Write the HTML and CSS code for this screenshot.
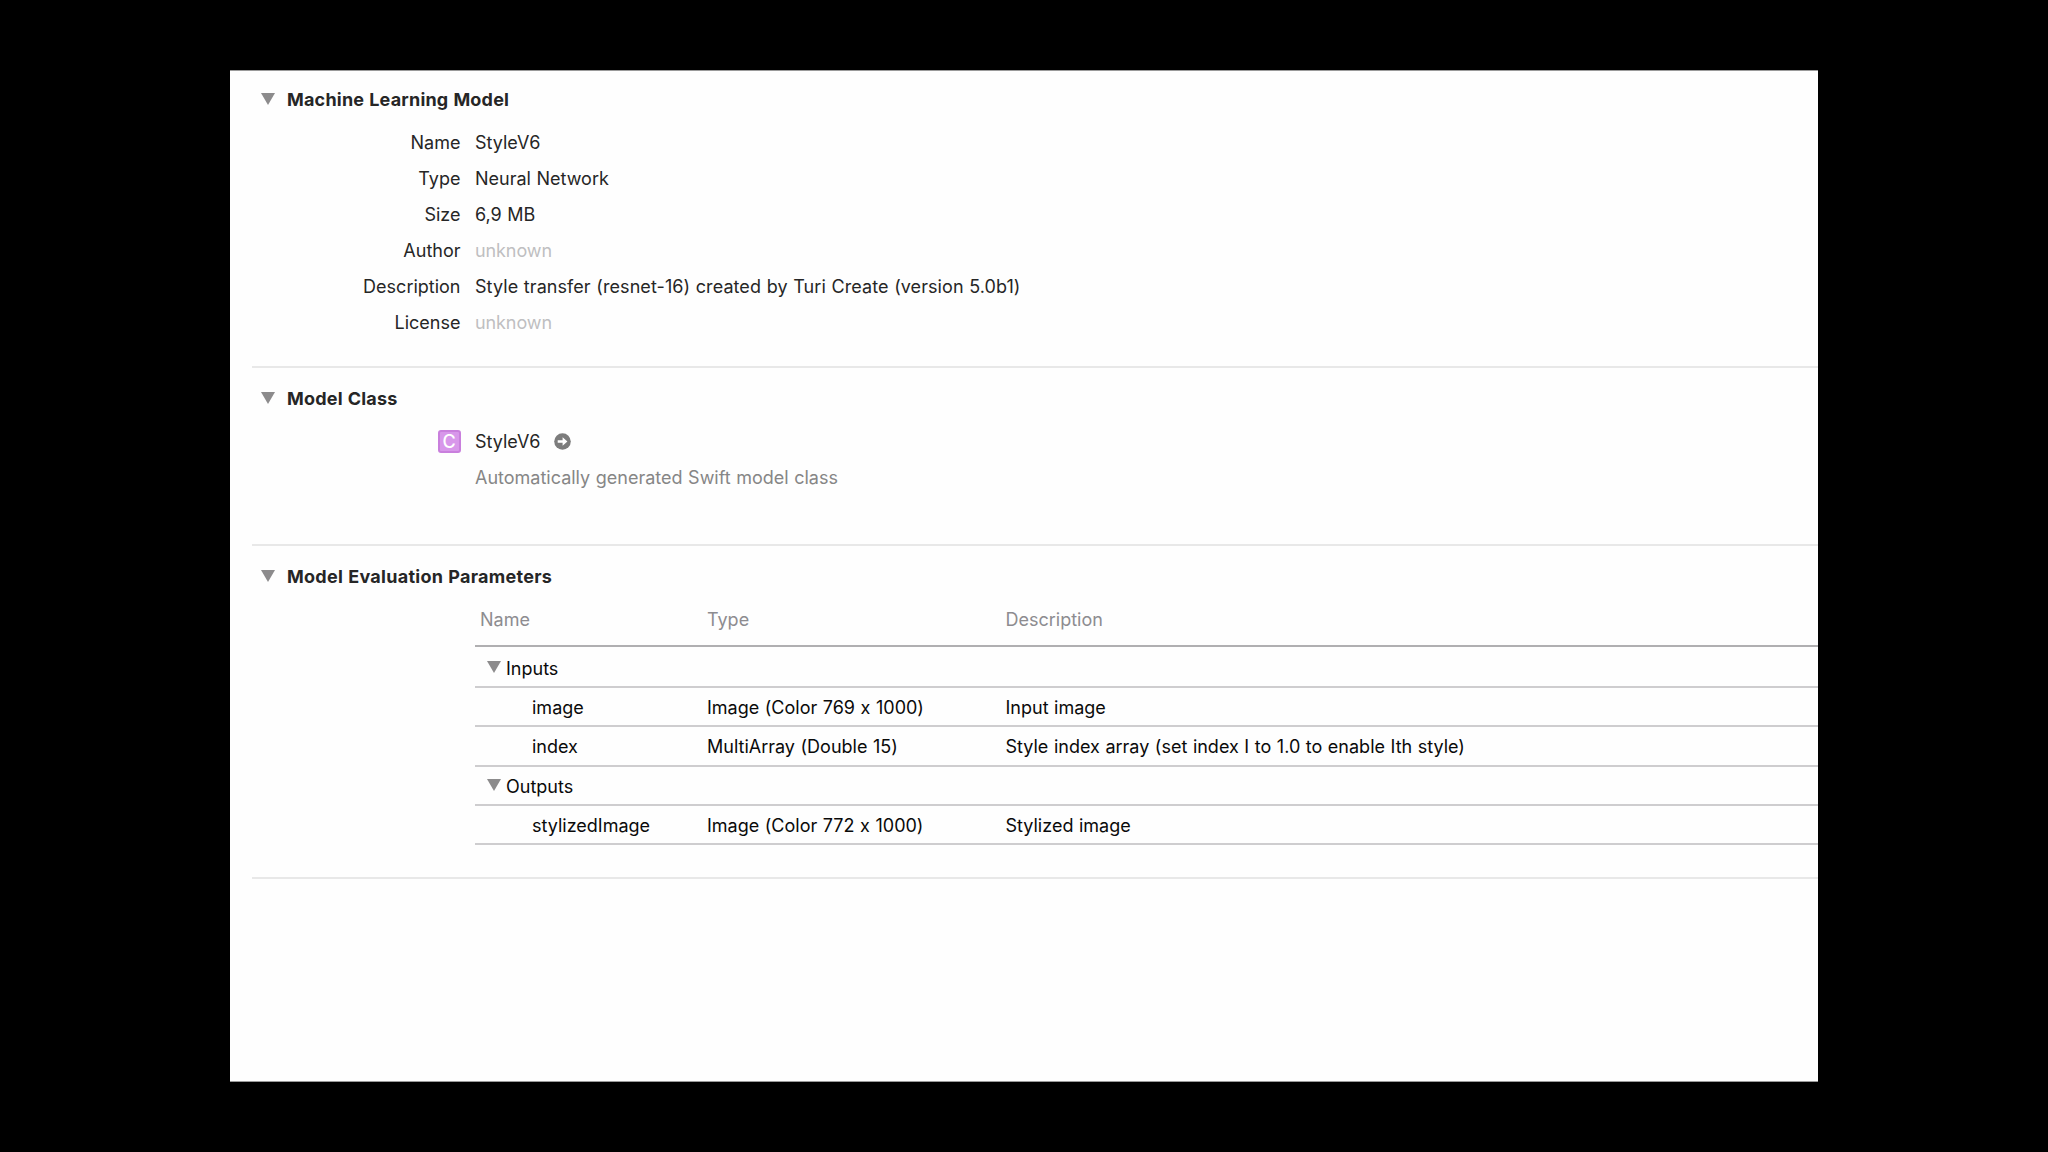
FILE: index.html
```html
<!DOCTYPE html>
<html lang="en">
<head>
  <meta charset="UTF-8">
  <title>StyleV6.mlmodel</title>
  <link rel="stylesheet" href="styles.css">
</head>
<body>
  <div class="panel">
    <section class="section model">
      <h2><svg class="triangle" viewBox="0 0 14 12"><path d="M0 0H14L7 12Z"/></svg>Machine Learning Model</h2>
      <dl class="info">
        <dt>Name</dt><dd>StyleV6</dd>
        <dt>Type</dt><dd>Neural Network</dd>
        <dt>Size</dt><dd>6,9 MB</dd>
        <dt>Author</dt><dd class="unknown">unknown</dd>
        <dt>Description</dt><dd class="summary">Style transfer (resnet-16) created by Turi Create (version 5.0b1)</dd>
        <dt>License</dt><dd class="unknown">unknown</dd>
      </dl>
    </section>

    <section class="section class">
      <h2><svg class="triangle" viewBox="0 0 14 12"><path d="M0 0H14L7 12Z"/></svg>Model Class</h2>
      <div class="info">
        <span class="badge">C</span>
        <div class="class-name">
          <span>StyleV6</span>
          <svg class="arrow" viewBox="0 0 17 17">
            <circle cx="8.5" cy="8.5" r="8.3" fill="#7c7c7c"/>
            <path d="M3.7 7.3H8.6V4.2L13.4 8.5L8.6 12.8V9.7H3.7Z" fill="#fff"/>
          </svg>
        </div>
        <p class="note">Automatically generated Swift model class</p>
      </div>
    </section>

    <section class="section params">
      <h2><svg class="triangle" viewBox="0 0 14 12"><path d="M0 0H14L7 12Z"/></svg>Model Evaluation Parameters</h2>
      <div class="table">
        <div class="row head"><span>Name</span><span>Type</span><span>Description</span></div>
        <div class="row group"><span><svg class="triangle" viewBox="0 0 14 12"><path d="M0 0H14L7 12Z"/></svg>Inputs</span></div>
        <div class="row item"><span>image</span><span>Image (Color 769 x 1000)</span><span>Input image</span></div>
        <div class="row item"><span>index</span><span>MultiArray (Double 15)</span><span>Style index array (set index I to 1.0 to enable Ith style)</span></div>
        <div class="row group"><span><svg class="triangle" viewBox="0 0 14 12"><path d="M0 0H14L7 12Z"/></svg>Outputs</span></div>
        <div class="row item"><span>stylizedImage</span><span>Image (Color 772 x 1000)</span><span>Stylized image</span></div>
      </div>
    </section>
  </div>
</body>
</html>
```

FILE: styles.css
```css
* {
  box-sizing: border-box;
}

body {
  margin: 0;
  height: 1152px;
  padding: 70px 230px 0;
  background-color: #000;
  font-family: Inter, "Liberation Sans", sans-serif;
  font-size: 18px;
  font-feature-settings: "calt" 0;
  word-spacing: 0.5px;
  color: #262626;
  overflow: hidden;
}

.panel {
  height: 1012px;
  padding-left: 22px;
  background-color: #fefefe;
  border-top: 1px solid #9a9a9a;
  border-bottom: 1px solid #9a9a9a;
}

.section {
  border-bottom: 2px solid #e8e8e8;
}

.model {
  height: 297px;
  padding-top: 10px;
}

.class {
  height: 178px;
  padding-top: 12px;
}

.params {
  height: 333px;
  padding-top: 12px;
}

h2 {
  display: flex;
  align-items: center;
  height: 36px;
  margin: 0 0 7px;
  padding-left: 9px;
  font-size: 18px;
  font-weight: 700;
  letter-spacing: 0.2px;
}

.params h2 {
  letter-spacing: 0.28px;
}

.triangle {
  flex: none;
  width: 14px;
  height: 12px;
  fill: #8c8b8c;
}

h2 .triangle {
  margin-right: 12px;
}

.info {
  display: grid;
  grid-template-columns: 208.5px auto;
  grid-auto-rows: 36px;
  column-gap: 14.5px;
  align-items: center;
  margin: 0;
}

dt {
  text-align: right;
}

dd,
.note {
  margin: 0;
}

.unknown {
  color: #bfbfc1;
  letter-spacing: -0.1px;
}

.summary {
  letter-spacing: 0.07px;
}

.badge {
  justify-self: end;
  width: 23px;
  height: 23px;
  border: 2px solid #c97fdd;
  border-radius: 3px;
  background-color: #d897ea;
  color: #fff;
  font-weight: 500;
  line-height: 19px;
  text-align: center;
}

.class-name {
  display: flex;
  align-items: center;
  gap: 14px;
}

.arrow {
  width: 17px;
  height: 17px;
}

.note {
  grid-column: 2;
  color: #868686;
}

.table {
  margin-left: 223px;
  color: #0a0a0a;
}

.row {
  display: grid;
  grid-template-columns: 227px 298.5px 1fr;
  align-items: center;
  height: 39.25px;
  padding-top: 2px;
  padding-left: 5px;
  border-bottom: 2px solid #cecdcf;
}

.head {
  height: 46px;
  padding-top: 0;
  padding-bottom: 7px;
  border-bottom: 2px solid #b0afb1;
  color: #8d8c90;
}

.group {
  padding-left: 12px;
}

.head + .group {
  height: 41px;
  padding-top: 3px;
}

.group span {
  display: flex;
  align-items: center;
  gap: 5px;
}

.group .triangle {
  margin-bottom: 2px;
}

.item span:first-child {
  padding-left: 52px;
}
```
